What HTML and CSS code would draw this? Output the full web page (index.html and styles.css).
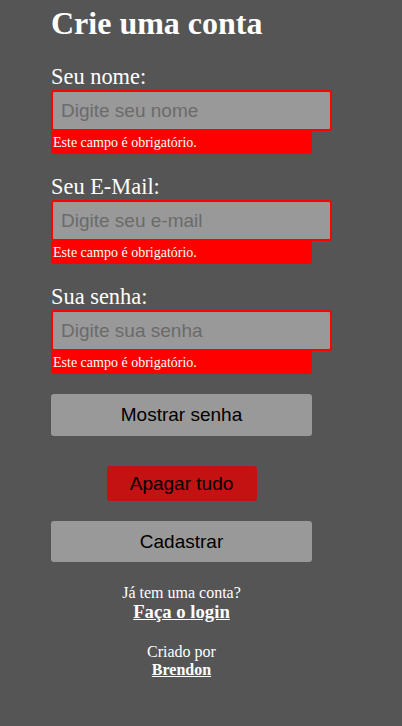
FILE: index.html
```html
<!DOCTYPE html>
<html lang="pt-BR">
<head>
<meta charset="utf-8">
<title>Crie uma conta</title>
<link rel="stylesheet" href="styles.css">
</head>
<body>
<main class="page">
  <h1 class="title">Crie uma conta</h1>
  <form class="form">
    <div class="field">
      <label class="label" for="nome">Seu nome:</label>
      <input class="input" id="nome" type="text" placeholder="Digite seu nome">
      <p class="error">Este campo é obrigatório.</p>
    </div>
    <div class="field">
      <label class="label" for="email">Seu E-Mail:</label>
      <input class="input" id="email" type="text" placeholder="Digite seu e-mail">
      <p class="error">Este campo é obrigatório.</p>
    </div>
    <div class="field">
      <label class="label" for="senha">Sua senha:</label>
      <input class="input" id="senha" type="password" placeholder="Digite sua senha">
      <p class="error">Este campo é obrigatório.</p>
    </div>
    <button type="button" class="btn btn-show">Mostrar senha</button>
    <button type="button" class="btn btn-clear">Apagar tudo</button>
    <button type="submit" class="btn btn-submit">Cadastrar</button>
  </form>
  <footer class="footer">
    <p class="footer-line">Já tem uma conta?</p>
    <a class="footer-link login" href="#">Faça o login</a>
    <p class="footer-line credit">Criado por</p>
    <a class="footer-link author" href="#">Brendon</a>
  </footer>
</main>
</body>
</html>
```

FILE: styles.css
```css
html, body {
  margin: 0;
  padding: 0;
  background: #555555;
}

body {
  font-family: "Liberation Serif", "Times New Roman", serif;
  color: #ffffff;
}

.page {
  width: 261px;
  padding: 5px 0 0 51px;
}

.title {
  margin: 0 0 21px;
  font-size: 32px;
  line-height: 37px;
  font-weight: bold;
}

.form {
  display: flex;
  flex-direction: column;
}

.field {
  display: flex;
  flex-direction: column;
  margin-bottom: 19px;
}

.label {
  display: block;
  font-size: 22.4px;
  line-height: 27px;
}

.input {
  box-sizing: border-box;
  width: 281px;
  height: 41px;
  margin: 0;
  padding: 0 8px;
  border: 2px solid #ff0000;
  border-radius: 3px;
  background: #999999;
  font-family: "Liberation Sans", Arial, sans-serif;
  font-size: 19px;
  color: #000000;
  outline: none;
}

.input::placeholder {
  color: #6b6b6b;
  opacity: 1;
}

.error {
  box-sizing: border-box;
  width: 261px;
  height: 23px;
  margin: 0;
  padding-left: 2px;
  background: #ff0000;
  border-radius: 0 0 3px 3px;
  font-size: 14px;
  line-height: 23px;
  color: #ffffff;
}

.btn {
  box-sizing: border-box;
  margin: 0;
  border: none;
  border-radius: 3px;
  background: #999999;
  color: #000000;
  font-family: "Liberation Sans", Arial, sans-serif;
  font-size: 19px;
  padding: 0;
  cursor: pointer;
}

.btn-show {
  width: 261px;
  height: 42px;
  margin-top: 1px;
}

.btn-clear {
  align-self: center;
  width: 150px;
  height: 35px;
  margin-top: 30px;
  background: #c41111;
}

.btn-submit {
  width: 261px;
  height: 41px;
  margin-top: 20px;
}

.footer {
  display: flex;
  flex-direction: column;
  align-items: center;
  padding-top: 22px;
}

.footer-line {
  margin: 0;
  font-size: 16px;
  line-height: 17px;
}

.footer-link {
  color: #ffffff;
  font-weight: bold;
  text-decoration: underline;
}

.login {
  font-size: 18.72px;
  line-height: 21px;
}

.credit {
  margin-top: 21px;
  line-height: 18px;
}

.author {
  font-size: 16px;
  line-height: 18px;
}
```
